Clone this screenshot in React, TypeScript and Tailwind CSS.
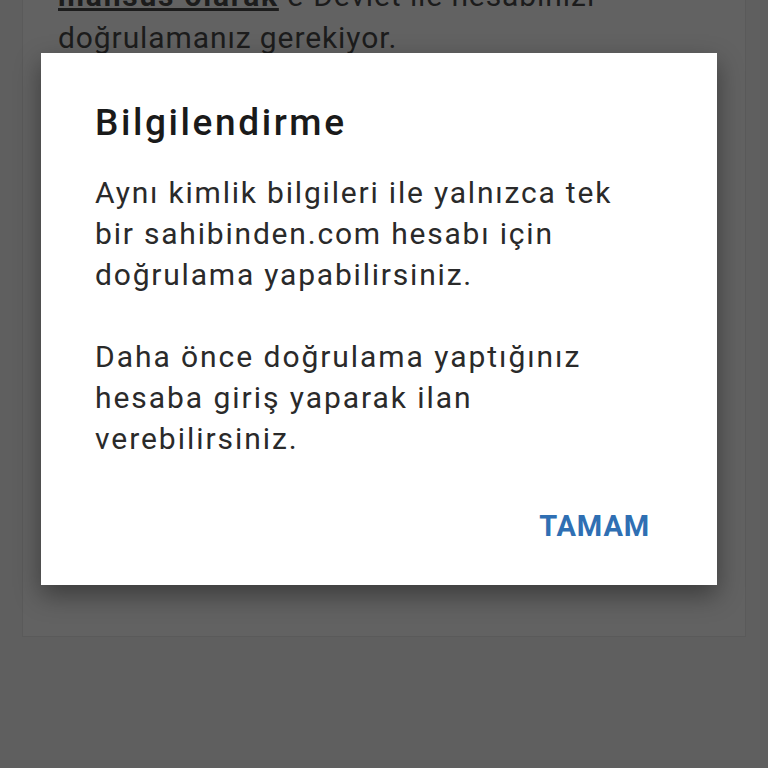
import React from "react";

const font = { fontFamily: "Roboto, 'Noto Sans', sans-serif" };

const App = () => {
    return (
        <div className="relative h-[768px] w-[768px] overflow-hidden bg-[#5f5f5f]" style={font}>
            {/* page underneath, dimmed by the scrim */}
            <div className="mx-[22px] h-[662px] border-x border-b border-[#5a5a5a] bg-[#626262] px-[35px]">
                <p className="-mt-[25px] text-[30px] leading-[42px] tracking-[0.03em] text-[#1c1c1c]">
                    <span className="font-bold tracking-[0.06em] underline">mahsus olarak</span> e-Devlet ile hesabınızı
                    <br />
                    doğrulamanız gerekiyor.
                </p>
            </div>

            {/* dialog */}
            <div className="absolute left-[41px] top-[53px] flex h-[532px] w-[676px] flex-col bg-white shadow-[0_10px_24px_rgba(0,0,0,0.4)]">
                <div className="px-[54px] pt-[50px]">
                    <h2 className="text-[37px] font-medium leading-[40px] tracking-[0.07em] text-[#1a1a1a]">Bilgilendirme</h2>
                    <p className="mt-[29px] text-[30px] leading-[41px] tracking-[0.06em] text-[#2a2a2a]">
                        Aynı kimlik bilgileri ile yalnızca tek
                        <br />
                        bir sahibinden.com hesabı için
                        <br />
                        doğrulama yapabilirsiniz.
                    </p>
                    <p className="mt-[41px] text-[30px] leading-[41px] tracking-[0.065em] text-[#2a2a2a]">
                        Daha önce doğrulama yaptığınız
                        <br />
                        hesaba giriş yaparak ilan
                        <br />
                        verebilirsiniz.
                    </p>
                </div>
                <div className="mt-[49px] flex justify-end pr-[67px]">
                    <button className="text-[29px] font-bold leading-[36px] tracking-[0.03em] text-[#2f6fb3]">TAMAM</button>
                </div>
            </div>
        </div>
    );
};

export default App;
